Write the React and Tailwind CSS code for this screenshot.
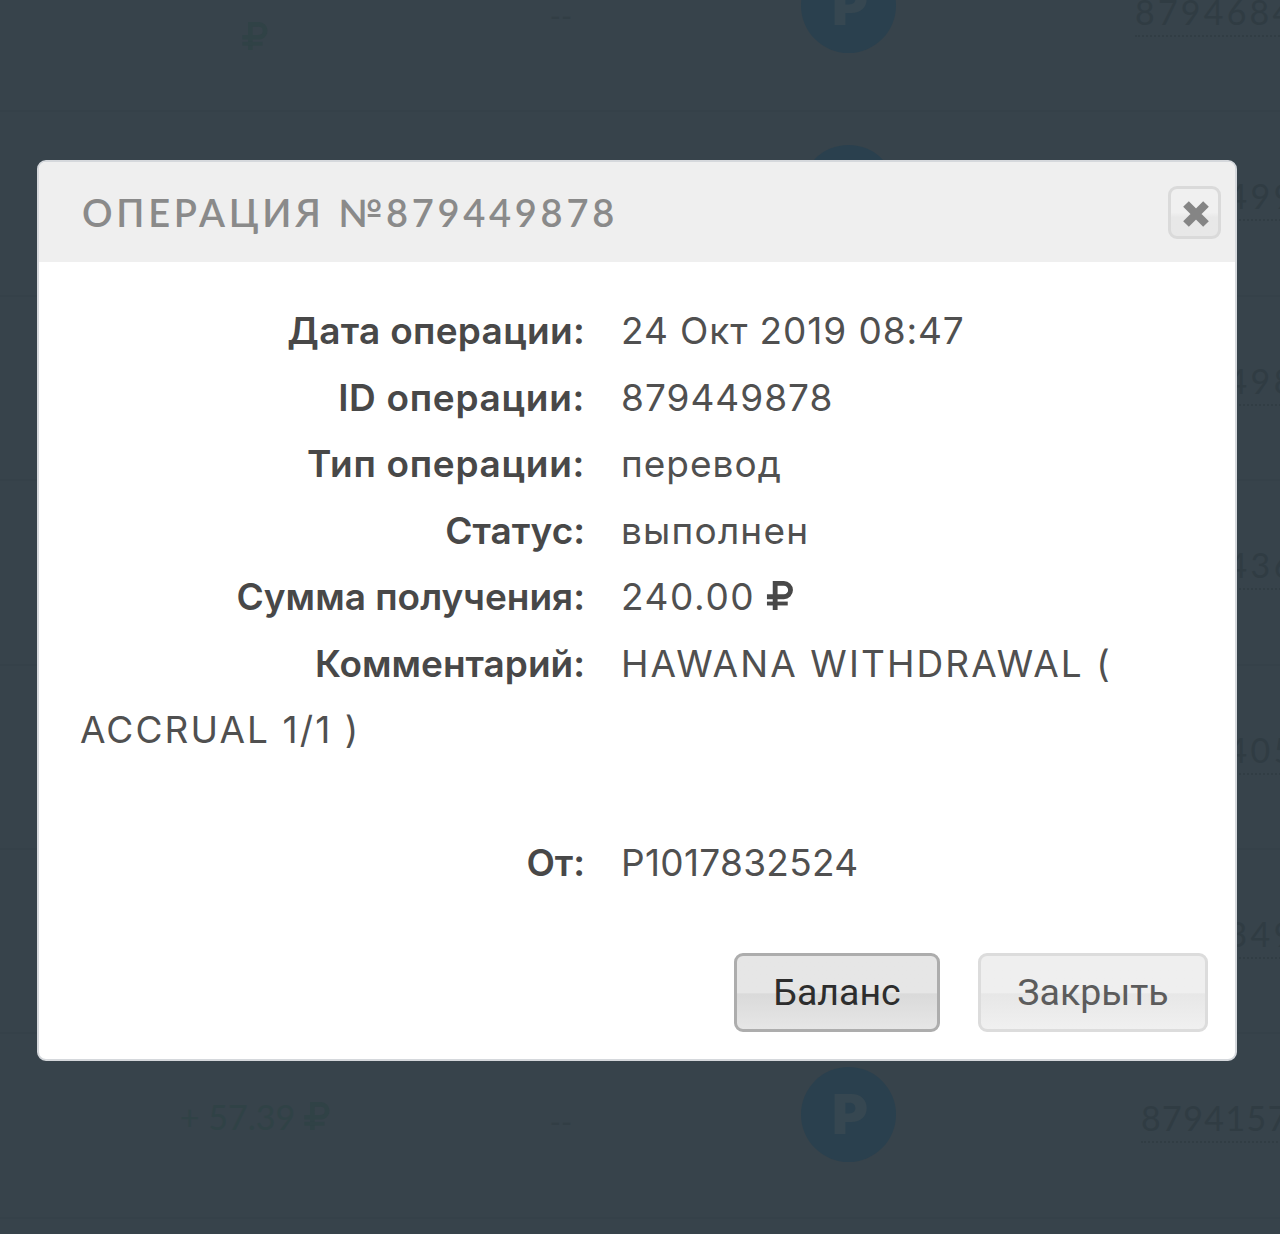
import React from 'react';

const operations = [
  { id: '8794684', note: '--', rouble: true, amountClass: 'pt-[56px]', avatarClass: 'h-[154px]', idClass: 'pl-[51px] tracking-[3.2px]' },
  { id: '8794499', avatarClass: 'h-[160px]', idClass: 'pl-[51px] tracking-[3.4px]' },
  { id: '8794498', avatarClass: 'h-[160px]', idClass: 'pl-[51px] tracking-[3.4px]' },
  { id: '8794436', avatarClass: 'h-[160px]', idClass: 'pl-[51px] tracking-[3.4px]' },
  { id: '8794405', avatarClass: 'h-[160px]', idClass: 'pl-[51px] tracking-[3.4px]' },
  { id: '8794349', avatarClass: 'h-[160px]', idClass: 'pl-[51px] tracking-[3.4px]' },
  { id: '8794157', note: '--', amount: '+ 57.39', rouble: true, amountClass: 'pt-[4px]', avatarClass: 'h-[160px]', idClass: 'pl-[57px] tracking-[1.4px]' },
];

const details = [
  { label: 'Дата операции:', value: '24 Окт 2019 08:47', labelClass: 'tracking-[0.3px]', valueClass: 'tracking-[0.9px]' },
  { label: 'ID операции:', value: '879449878', labelClass: 'tracking-[0.7px]', valueClass: 'tracking-[1px]' },
  { label: 'Тип операции:', value: 'перевод', labelClass: 'tracking-[0.7px]', valueClass: 'tracking-[1px]' },
  { label: 'Статус:', value: 'выполнен', labelClass: 'tracking-normal', valueClass: 'tracking-[1.2px]' },
  { label: 'Сумма получения:', value: '240.00', rouble: true, labelClass: 'tracking-normal', valueClass: 'tracking-[1.6px]' },
  { label: 'Комментарий:', value: 'HAWANA WITHDRAWAL ( ACCRUAL 1/1 )', labelClass: 'tracking-normal', valueClass: 'tracking-[2.1px]' },
];

const Rouble = ({ className }) => (
  <svg className={className} viewBox="0 0 27 30" fill="none" stroke="currentColor">
    <path strokeWidth="5" d="M8.5 30V2.5h9a6.8 6.8 0 0 1 0 13.8H0" />
    <path strokeWidth="4" d="M0 23.3h21.5" />
  </svg>
);

const OperationRow = ({ operation }) => (
  <div className="grid h-[184.4px] shrink-0 grid-cols-[510px_102px_472px_1fr] border-b-2 border-[#354149]">
    <div className={`flex h-[160px] items-center justify-center gap-[9px] text-[34px] text-[#304246] ${operation.amountClass || ''}`}>
      {operation.amount && <span>{operation.amount}</span>}
      {operation.rouble && <Rouble className="h-[28px] w-[26px]" />}
    </div>
    <div className="flex h-[175px] items-center justify-center text-[30px] text-[#323e45]">{operation.note}</div>
    <div className={`flex items-center justify-center ${operation.avatarClass}`}>
      <div className="flex h-[95px] w-[95px] shrink-0 items-center justify-center rounded-full bg-[#2a404e] pl-[4px] font-['Inter',sans-serif] text-[55px] font-black text-[#364751]">
        P
      </div>
    </div>
    <div className={`flex h-[170px] items-center text-[34px] text-[#303c43] ${operation.idClass}`}>
      <span className="border-b-2 border-dotted border-[#313d44] leading-[46px]">{operation.id}</span>
    </div>
  </div>
);

const Detail = ({ label, value, rouble, labelClass, valueClass }) => (
  <div>
    <span className={`mr-[36px] inline-block w-[505px] text-right font-semibold ${labelClass}`}>{label}</span>
    <span className={`text-[#505050] ${valueClass}`}>{value}</span>
    {rouble && <Rouble className="ml-[11px] inline-block h-[29px] w-[28px] align-baseline" />}
  </div>
);

export default function App() {
  return (
    <div className="relative h-[1234px] w-[1280px] overflow-hidden bg-[#37434b] font-['Lato',sans-serif]">
      <div className="-mt-[72px] flex flex-col">
        {operations.map((operation) => (
          <OperationRow key={operation.id} operation={operation} />
        ))}
      </div>

      <div className="absolute left-[37px] top-[160px] flex h-[901px] w-[1200px] flex-col overflow-hidden rounded-[9px] border-2 border-[#d5d8dc] bg-white">
        <div className="flex h-[100px] shrink-0 items-center justify-between bg-[#efefef] pl-[43px] pr-[14px]">
          <h2 className="text-[38px] font-semibold tracking-[3.75px] text-[#8a8a8a]">ОПЕРАЦИЯ №879449878</h2>
          <button className="mt-px flex h-[53px] w-[53px] items-center justify-center rounded-[9px] border-[3px] border-[#dadada] bg-linear-to-b from-[#f0f0f0] from-50% to-[#e8e8e8] to-60% text-[#858585]">
            <svg className="mt-[2px] ml-[2px] h-[26px] w-[26px]" viewBox="0 0 26 26" stroke="currentColor" strokeWidth="8">
              <path d="M3 3l20 20M23 3L3 23" />
            </svg>
          </button>
        </div>

        <div className="px-[41px] pt-[36px] font-['Inter',sans-serif] text-[37px] leading-[66.5px] text-[#484848]">
          {details.map((detail) => (
            <Detail key={detail.label} {...detail} />
          ))}
          <div className="pt-[66.5px]">
            <Detail label="От:" value="P1017832524" labelClass="tracking-normal" valueClass="tracking-[0.3px]" />
          </div>
        </div>

        <div className="mt-auto flex justify-end gap-[38px] pb-[27px] pr-[27px] font-['Roboto',sans-serif] text-[37.5px]">
          <button className="h-[79px] w-[206px] rounded-[9px] border-[3px] border-[#adadad] bg-linear-to-b from-[#e6e6e6] from-50% via-[#dadada] via-52% to-[#e6e6e6] text-[#2d2d2d]">
            Баланс
          </button>
          <button className="h-[79px] w-[230px] rounded-[9px] border-[3px] border-[#dcdcdc] bg-linear-to-b from-[#efefef] from-50% via-[#e7e7e7] via-52% to-[#f0f0f0] text-[#5c5c5c]">
            Закрыть
          </button>
        </div>
      </div>
    </div>
  );
}
